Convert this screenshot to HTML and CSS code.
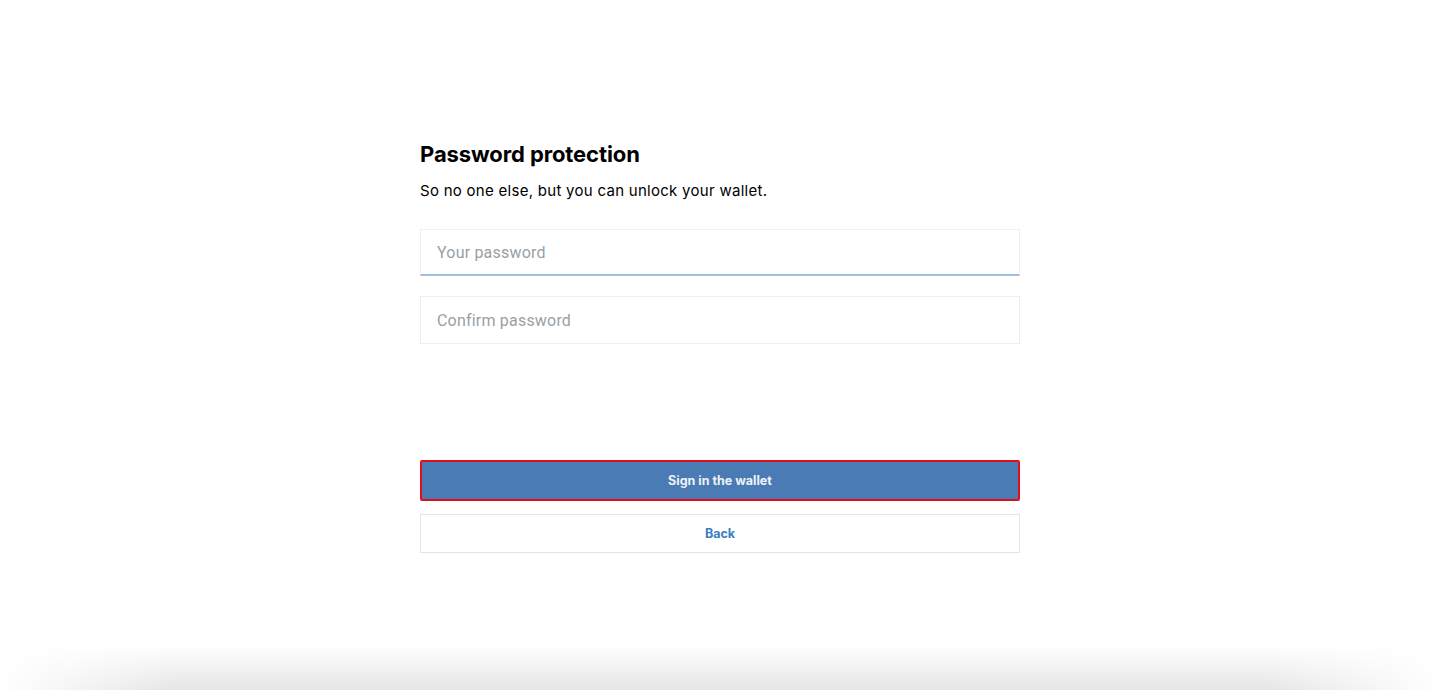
FILE: index.html
```html
<!DOCTYPE html>
<html lang="en">
<head>
<meta charset="utf-8">
<title>Password protection</title>
<link rel="stylesheet" href="styles.css">
</head>
<body>
<main class="page">
  <section class="card">
    <h1 class="title">Password protection</h1>
    <p class="subtitle">So no one else, but you can unlock your wallet.</p>
    <div class="fields">
      <input class="field field-active" type="password" placeholder="Your password">
      <input class="field" type="password" placeholder="Confirm password">
    </div>
    <div class="actions">
      <button class="btn btn-primary" type="button">Sign in the wallet</button>
      <button class="btn btn-secondary" type="button">Back</button>
    </div>
  </section>
</main>
<div class="bottom-shade"></div>
</body>
</html>
```
FILE: styles.css
```css
html, body {
  margin: 0;
  padding: 0;
  background: #ffffff;
  height: 100%;
  overflow: hidden;
}
body {
  font-family: Inter, "Liberation Sans", sans-serif;
  color: #000;
}
.page {
  display: flex;
  justify-content: center;
  padding-top: 139px;
}
.card {
  width: 600px;
  display: flex;
  flex-direction: column;
}
.title {
  margin: 0;
  font-size: 22px;
  line-height: 30px;
  font-weight: 700;
  letter-spacing: -0.1px;
}
.subtitle {
  margin: 12px 0 0;
  font-size: 15px;
  line-height: 20px;
  letter-spacing: 0.28px;
}
.fields {
  margin-top: 28px;
  display: flex;
  flex-direction: column;
  gap: 20px;
}
.field {
  box-sizing: border-box;
  width: 100%;
  height: 48px;
  margin: 0;
  border: 1px solid #efefef;
  padding: 0 16px;
  font-family: Roboto, "Liberation Sans", sans-serif;
  font-size: 16px;
  color: #333;
  background: #fff;
  outline: none;
}
.field-active {
  height: 47px;
  border-bottom: 2px solid #9cc0e0;
}
.field::placeholder {
  color: #9aa0a6;
  letter-spacing: 0.2px;
}
.actions {
  margin-top: 116px;
  display: flex;
  flex-direction: column;
  gap: 13px;
}
.btn {
  box-sizing: border-box;
  width: 100%;
  margin: 0;
  font-family: Inter, "Liberation Sans", sans-serif;
  font-size: 12.5px;
  font-weight: 700;
  cursor: pointer;
}
.btn-primary {
  height: 41px;
  background: #4a7bb5;
  border: 2px solid #e30d17;
  border-radius: 2px;
  color: #eef2f8;
}
.btn-secondary {
  height: 39px;
  background: #fff;
  border: 1px solid #dde6ef;
  color: #3a7ec2;
}
.bottom-shade {
  position: fixed;
  left: 0;
  right: 0;
  bottom: 0;
  height: 45px;
  pointer-events: none;
  background: linear-gradient(to bottom, rgba(225,225,225,0) 0%, rgba(225,225,225,0.85) 100%);
  -webkit-mask-image: linear-gradient(to right, transparent 0, #000 12%, #000 88%, transparent 100%);
  mask-image: linear-gradient(to right, transparent 0, #000 12%, #000 88%, transparent 100%);
}
```
